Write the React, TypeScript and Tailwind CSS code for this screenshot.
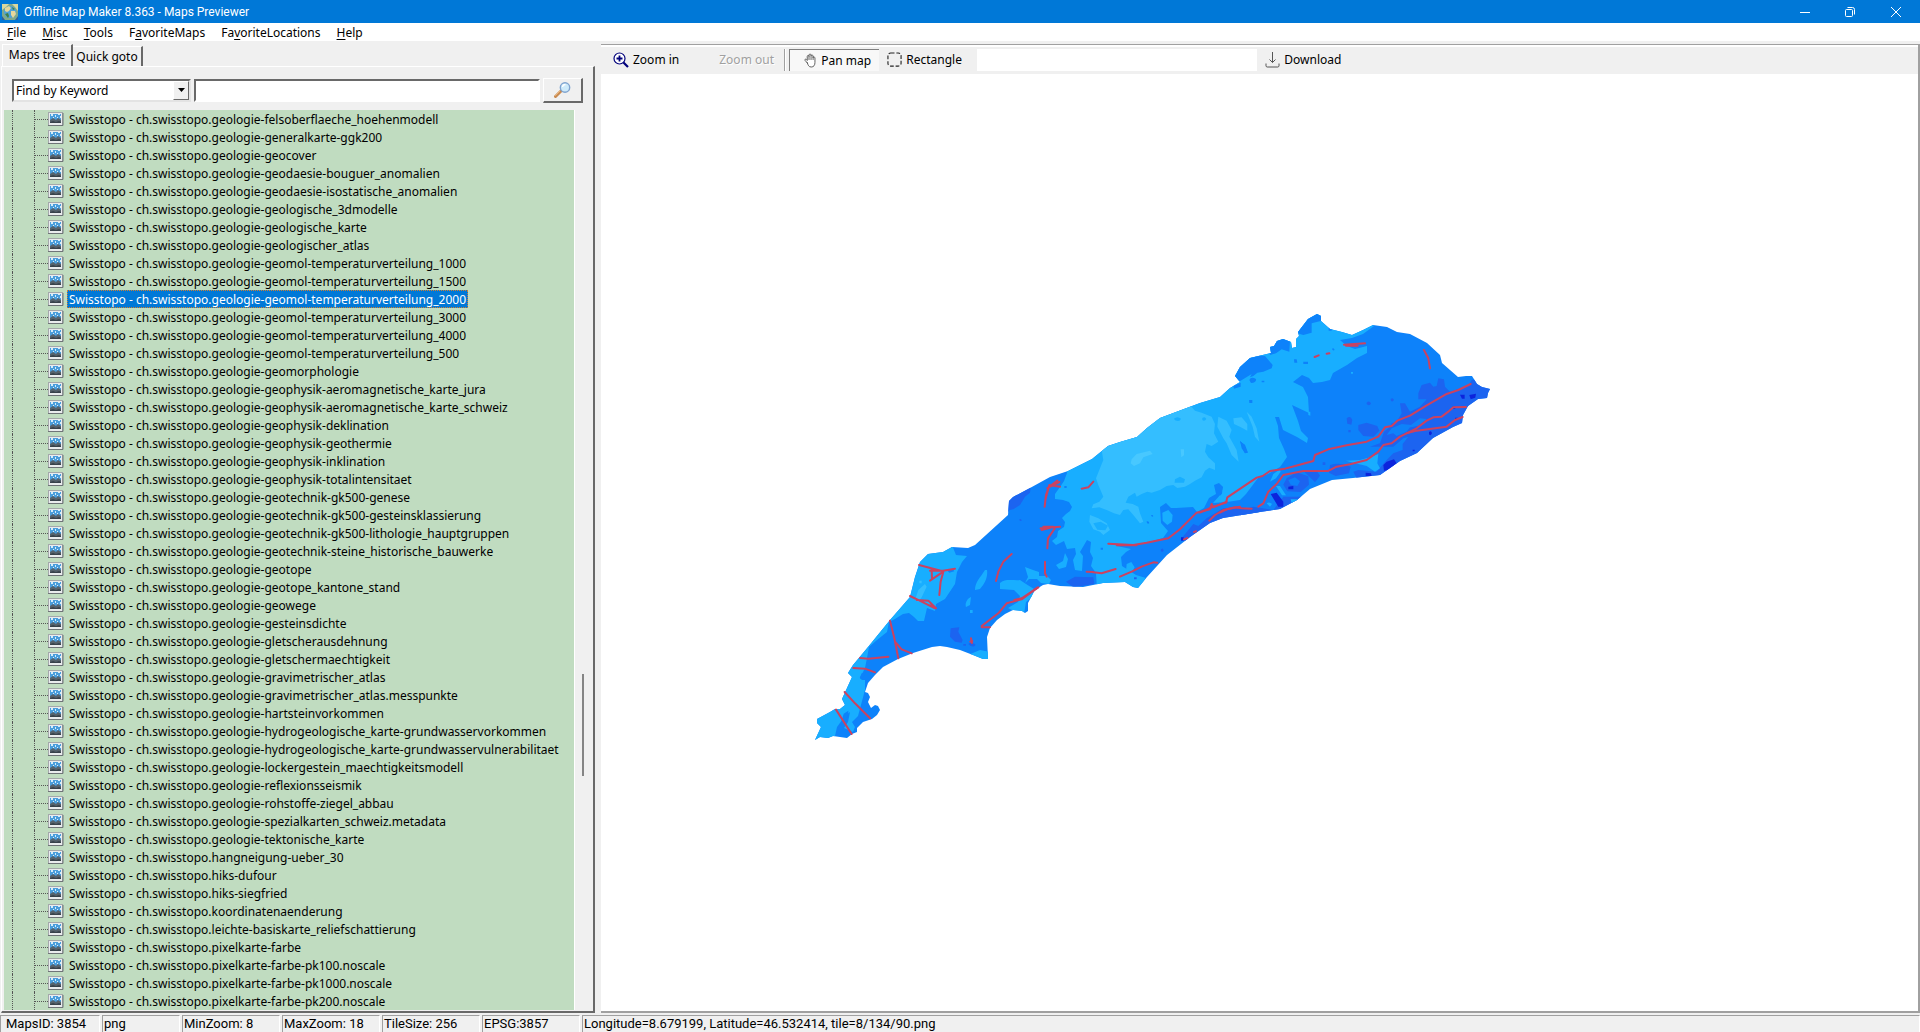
import { useState } from 'react'
import type { ReactNode } from 'react'

const layers = [
  'geologie-felsoberflaeche_hoehenmodell',
  'geologie-generalkarte-ggk200',
  'geologie-geocover',
  'geologie-geodaesie-bouguer_anomalien',
  'geologie-geodaesie-isostatische_anomalien',
  'geologie-geologische_3dmodelle',
  'geologie-geologische_karte',
  'geologie-geologischer_atlas',
  'geologie-geomol-temperaturverteilung_1000',
  'geologie-geomol-temperaturverteilung_1500',
  'geologie-geomol-temperaturverteilung_2000',
  'geologie-geomol-temperaturverteilung_3000',
  'geologie-geomol-temperaturverteilung_4000',
  'geologie-geomol-temperaturverteilung_500',
  'geologie-geomorphologie',
  'geologie-geophysik-aeromagnetische_karte_jura',
  'geologie-geophysik-aeromagnetische_karte_schweiz',
  'geologie-geophysik-deklination',
  'geologie-geophysik-geothermie',
  'geologie-geophysik-inklination',
  'geologie-geophysik-totalintensitaet',
  'geologie-geotechnik-gk500-genese',
  'geologie-geotechnik-gk500-gesteinsklassierung',
  'geologie-geotechnik-gk500-lithologie_hauptgruppen',
  'geologie-geotechnik-steine_historische_bauwerke',
  'geologie-geotope',
  'geologie-geotope_kantone_stand',
  'geologie-geowege',
  'geologie-gesteinsdichte',
  'geologie-gletscherausdehnung',
  'geologie-gletschermaechtigkeit',
  'geologie-gravimetrischer_atlas',
  'geologie-gravimetrischer_atlas.messpunkte',
  'geologie-hartsteinvorkommen',
  'geologie-hydrogeologische_karte-grundwasservorkommen',
  'geologie-hydrogeologische_karte-grundwasservulnerabilitaet',
  'geologie-lockergestein_maechtigkeitsmodell',
  'geologie-reflexionsseismik',
  'geologie-rohstoffe-ziegel_abbau',
  'geologie-spezialkarten_schweiz.metadata',
  'geologie-tektonische_karte',
  'hangneigung-ueber_30',
  'hiks-dufour',
  'hiks-siegfried',
  'koordinatenaenderung',
  'leichte-basiskarte_reliefschattierung',
  'pixelkarte-farbe',
  'pixelkarte-farbe-pk100.noscale',
  'pixelkarte-farbe-pk1000.noscale',
  'pixelkarte-farbe-pk200.noscale',
]

// [before, hotkey, after]
const menus = [
  ['', 'F', 'ile'],
  ['', 'M', 'isc'],
  ['', 'T', 'ools'],
  ['F', 'a', 'voriteMaps'],
  ['Fa', 'v', 'oriteLocations'],
  ['', 'H', 'elp'],
]

const AppIcon = () => (
  <svg width="16" height="16" viewBox="0 0 16 16">
    <rect width="16" height="16" rx="1" fill="#7fa98c" />
    <path d="M0 0h7L4 3 0 6zM10 0h6v7l-3-4z" fill="#d9d8a0" />
    <circle cx="8" cy="8" r="6" fill="#4fa3d8" />
    <path d="M3 4l4-2 2 2-2 3-2 1-2-1zM9 7l4 0 1 3-3 4-2-3z" fill="#e6d79b" />
    <path d="M3 10l3-1 1 3-1 2zM10 3l3 2-2 1z" fill="#3f7f45" />
    <path d="M0 12l3 4H0zM13 16l3-4v4z" fill="#2d5f9c" />
  </svg>
)

const LayerIcon = () => (
  <svg width="16" height="16" viewBox="0 0 16 16" className="shrink-0">
    <rect x="0.5" y="1.5" width="14" height="13" fill="#e9ebed" stroke="#a4a8ab" />
    <path d="M0 14.500h15V2" fill="none" stroke="#6f7478" />
    <rect x="2" y="3" width="11" height="9" fill="#4a9ddc" />
    <path d="M3 3h2v2H3zM7 4h1v2H7zM10 3h2v1h-2zM5 6h1v1H5zM9 6h1v1H9zM12 5h1v2h-1z" fill="#d3ecfa" />
    <path d="M2 9l3-2 3 2 2-2 3 2v3H2z" fill="#56626c" />
    <path d="M2 11l3-1 3 1 3-1 2 1v1H2z" fill="#38424b" />
  </svg>
)

const SearchIcon = () => (
  <svg width="17" height="16" viewBox="0 0 17 16">
    <path d="M1.5 14.5L7 9" stroke="#c98a50" strokeWidth="3" strokeLinecap="round" />
    <path d="M1.2 13.6L6 8.8" stroke="#efc08a" strokeWidth="1" />
    <circle cx="11" cy="5.5" r="4.7" fill="#cdeafa" stroke="#7fa3cf" strokeWidth="1.4" />
    <path d="M8.5 5a3 3 0 0 1 3-2.500" stroke="#fff" strokeWidth="1.300" fill="none" />
  </svg>
)

const ZoomInIcon = () => (
  <svg width="16" height="16" viewBox="0 0 16 16" fill="none" stroke="#00007b">
    <circle cx="6.500" cy="6.500" r="5.500" strokeWidth="1.200" fill="#fff" />
    <path d="M3.500 6.500h6M6.500 3.500v6" strokeWidth="1.800" />
    <path d="M10.500 10.500l4.500 4.500" strokeWidth="2.200" />
  </svg>
)

const HandIcon = () => (
  <svg width="13" height="15" viewBox="0 0 14 16" fill="#fff" stroke="#555" strokeWidth="1" strokeLinejoin="round" strokeLinecap="round">
    <path d="M3.500 10.500L1.200 8c-.8-.9.3-1.900 1.200-1.200L3.500 8V3.500c0-1.200 1.900-1.200 1.900 0V2c0-1.200 2.200-1.200 2.200 0v1c0-1.200 2.200-1.100 2.200.2V5c0-1.100 2-1 2 .2V10c0 3-1.200 5-4 5C5 15 4.500 13 3.500 10.500z" />
    <path d="M5.400 3.500V7M7.600 3v4M9.800 4v3" />
  </svg>
)

const RectIcon = () => (
  <svg width="15" height="15" viewBox="0 0 16 16" fill="none" stroke="#222" strokeWidth="1.200">
    <rect x="1" y="1" width="14" height="14" rx="3" strokeDasharray="4 2" />
  </svg>
)

const DownloadIcon = () => (
  <svg width="15" height="16" viewBox="0 0 15 16" fill="none" stroke="#555" strokeWidth="1">
    <path d="M7.500 0v10.500M4.500 7.500l3 3 3-3M1 11.500v2.300c0 .7.400 1.200 1.200 1.200h10.600c.8 0 1.200-.5 1.200-1.200v-2.300" />
  </svg>
)

const outline =
  'M815 740L820 737 828 738 833 736 847 738 852 734 857 732 857 728 863 722 872 719 877 715 880 710 878 706 875 705 871 708 868 702 870 697 868 693 865 692 868 683 875 675 883 667 898 659 913 653 932 647 940 646 947 647 960 650 973 655 983 659 988 659 987 637 990 628 997 620 1005 614 1013 610 1022 611 1025 613 1028 611 1028 603 1035 590 1043 585 1048 584 1060 586 1083 587 1103 583 1125 582 1133 587 1138 588 1147 577 1167 555 1190 537 1210 523 1223 518 1260 512 1280 509 1297 500 1310 489 1332 480 1353 478 1380 475 1390 468 1400 461 1417 453 1433 438 1453 427 1462 423 1463 415 1468 406 1478 399 1487 398 1488 393 1490 389 1482 387 1477 384 1472 376 1466 376 1458 377 1442 363 1440 355 1427 343 1410 334 1397 332 1387 327 1373 325 1363 330 1352 335 1342 332 1330 329 1321 321 1321 316 1317 314 1308 319 1298 332 1299 336 1296 339 1296 347 1292 348 1291 342 1283 339 1277 341 1274 346 1270 347 1271 353 1250 358 1240 367 1235 376 1240 382 1230 388 1220 397 1200 403 1160 418 1147 428 1137 437 1120 442 1108 446 1092 459 1068 471 1050 477 1030 488 1013 497 1009 501 1008 515 975 545 968 548 952 547 943 552 928 554 920 562 915 577 910 597 890 620 868 647 853 665 848 673 852 677 842 699 845 705 840 709 835 709 830 712 817 719 817 723 821 727Z'

const SwissMap = () => (
  <svg className="block w-full h-full" viewBox="601 74 1317 937" role="img" aria-label="geologie-geomol-temperaturverteilung_2000">
    <defs>
      <clipPath id="area"><path d={outline} /></clipPath>
    </defs>
    <path d={outline} fill="#0d82fa" />
    <g clipPath="url(#area)">
      {/* light zone */}
      <g fill="#18aeff">
        <path d="M1067 465L1067 473 1064 481 1060 487 1055 494 1055 499 1063 500 1069 502 1072 507 1070 511 1066 514 1062 518 1065 522 1064 527 1058 531 1057 537 1052 541 1056 545 1064 541 1067 549 1075 548 1076 554 1073 560 1075 570 1082 571 1083 556 1080 552 1087 540 1091 542 1090 552 1093 558 1091 566 1096 573 1097 590 1128 590 1139 590 1146 578 1136 575 1122 566 1121 557 1126 552 1131 549 1117 546 1120 544 1142 544 1163 538 1168 531 1161 523 1160 507 1166 503 1171 508 1176 508 1193 507 1197 512 1204 508 1209 498 1216 494 1214 485 1219 483 1223 487 1221 494 1213 503 1227 502 1240 500 1246 494 1258 478 1268 474 1280 467 1287 457 1284 449 1279 438 1278 426 1275 417 1279 417 1283 430 1297 437 1307 443 1308 438 1301 431 1298 421 1292 405 1309 413 1308 397 1303 387 1293 382 1302 375 1309 378 1313 383 1322 382 1330 380 1333 373 1347 365 1357 358 1367 353 1367 346 1355 349 1347 346 1340 340 1352 338 1363 334 1374 326 1350 300 1290 300 1215 390 1150 410Z" />
        <path d="M800 760L835 736 837 727 845 716 850 712 848 722 844 728 853 732 855 727 852 722 858 716 865 690 865 680 862 680 860 678 865 668 867 658 869 647 877 640 887 632 889 622 895 619 903 614 909 613 914 617 918 621 924 621 927 608 935 611 936 604 945 599 949 593 955 584 957 572 962 562 967 556 956 555 952 545 920 540 840 640 800 720Z" />
        <path d="M985 570c-5 8-10 12-10 20l5-1c5-6 8-12 7-19zM971 597c-5 2-6 8-5 10l4-2zM968 655l12-5 10 2v10zM1000 583c5-5 15-2 20-3l6 4 8 5-2 8-6 5-2 12-8-2-8-4 10-6 2-6-6-6-14-1zM1025 567l8 3 6 2 0 4 8 0 4 4-2 4-8-1-4-4-8 0-4 4 3-6zM1065 553l-2 8-7 4 3 4 7-2 2-8z" />
      </g>
      {/* lighter core */}
      <g transform="translate(960 400) scale(.3333)">
        <path fill="#34beff" d="M425 150L430 180 420 205 408 235 415 255 430 290 418 305 400 313 395 325 418 322 440 330 462 340 480 345 490 330 505 328 520 345 540 370 550 365 540 340 535 320 518 312 497 308 505 290 525 278 530 290 545 282 562 275 575 278 600 270 620 258 640 255 652 264 675 260 690 252 705 242 725 232 735 212 748 203 765 210 765 190 745 172 735 155 740 132 755 138 775 125 762 100 765 72 755 50 725 38 705 32 690 15 560 60 520 110 440 130Z" />
        <path fill="#34beff" d="M775 50L800 62 815 90 808 110 830 150 836 185 815 165 800 130 790 115 772 80ZM820 55L845 52 862 72 862 92 840 80 822 72ZM860 35L875 50 890 85 898 125 885 110 878 80ZM390 345L415 355 440 370 450 390 430 405 420 395 400 388 388 365Z" />
        <path fill="#18aeff" d="M400 370l22-5 22 12-8 14-24-2zM645 238l15-8 15 8-3 10-28 0zM642 56q10-9 21 0q-3 11-18 5zM727 54q8-6 12 3q-5 8-12 3zM508 292l16-4 4 10-12 6z" />
        <path fill="#48c8ff" d="M515 178L530 162 570 152 578 162 550 172 540 190 522 198 512 190ZM662 148l10 0 0 18-8 6z" />
        <path fill="#0d82fa" d="M840 122L852 135 862 155 855 160 845 145ZM868 0l8 0 0 8-6 0zM573 346q6-3 7 3q-5 3-7-3zM560 364q7-2 8 6q-8 4-8-6zM422 443h7v6h-7zM313 258h7v6h-7z" />
        <path fill="#18aeff" d="M607 338L625 330 638 345 636 365 622 375 608 362ZM500 492l14-6 10 16-8 14-18-2zM560 412l14-8 5 12-12 8z" />
        <path fill="#1c64f0" d="M140 345L140 290 212 262 210 278 195 290 180 315 160 328 148 330ZM318 545L345 530 400 532 403 552 340 562ZM602 450q7-10 9 2q-6 8-9-2zM665 415L700 372 715 378 740 355 790 325 845 322 880 328 910 345 760 385 680 430ZM178 358q6-3 7 4q-7 3-7-4zM522 532h8v6h-8z" />
        <path fill="#0c24dc" d="M663 412l8 0 0 10-8 0z" />
      </g>
      {/* north-east */}
      <g transform="translate(1220 300) scale(.3333)">
        <path fill="#0d82fa" d="M40 250L62 242 95 222 90 232 100 228 112 218 130 215 155 205 158 195 135 168 100 165 40 200ZM88 240q5-12 20-3q2 10-15 12zM150 165L168 160 185 148 208 155 210 120 180 110 145 140ZM232 100L250 105 275 98 275 70 305 62 310 40 260 40ZM222 178h8l2 10h-9zM250 185h14v7h-14zM336 146q6-4 8 4q-6 4-8-4zM326 82h9v10h-9zM88 300h9v9h-9zM125 242h8v5h-8zM60 424L75 434 84 458 75 460ZM40 258l22-10 0 12-20 6zM0 555l8 6-2 20-6 6z" />
        <path fill="#1c64f0" d="M820 230L755 240 745 258 690 275 675 260 672 238 655 235 650 258 640 260 630 248 605 255 595 280 595 298 620 298 600 320 570 335 555 310 540 310 545 340 530 365 515 370 505 385 492 395 480 430 450 440 500 440 520 440 550 415 565 410 548 432 548 450 520 460 500 480 470 515 415 510 400 515 410 535 560 540 730 400 830 300ZM415 375L440 368 472 378 478 392 460 410 430 408 415 390ZM380 355q12-10 17 5l-3 14-12-3zM385 390h7v7h-7zM440 308q8-8 13 2q-4 10-13 2zM512 297q6-6 10 2q-3 8-9 4zM330 495q30-10 62 5l-5 20-40 8-20-10zM200 535l30-18 35 12 2 25-25 22-40-2-12-20zM60 630l40-10 60 10 30-40 60 0-40 50-150 10zM308 487h8v8h-8zM250 512l40 0 10 15-15 20-15-15z" />
        <path fill="#0d82fa" d="M500 405L515 385 545 372 575 375 560 395 530 408 520 400ZM560 385l40-30 20 2-25 20zM205 540l20-8 15 12-8 14-20-4z" />
        <path fill="#18aeff" d="M378 482L420 480 450 472 475 462 472 490 480 505 465 515 440 498 400 488ZM150 545L160 522 180 508 182 515 168 535ZM168 558l12 0 18 28-12 0zM140 610q8-6 16 2l-6 8zM212 598l28 0-5 12-20 0zM393 216h6v5h-6zM265 335l6 0 0 12-6-2z" />
        <path fill="#0c24dc" d="M152 582L170 578 190 605 190 620 175 620ZM205 560l15-2 0 10-15 0zM490 495L500 485 522 478 530 490 510 510 492 512ZM437 518l16 2 2 8-18 0zM720 284l14 0 0 12-8 0zM748 285l20-4-2 12-14 5zM627 396q7-6 9 4q-5 10-9 2zM697 320h9v6h-9zM705 353h8v6h-8zM578 449h6v5h-6z" />
      </g>
      {/* south-west */}
      <g transform="translate(800 540) scale(.3333)">
        <path fill="#1c64f0" d="M452 265L478 262 475 275 488 300 485 308 465 305 450 290ZM505 312q10-8 22 2q-8 12-22-2zM490 312h8v5h-8z" />
        <path fill="#0d82fa" d="M440 90l18-4 5 8-15 4zM145 512l0 12-12 25-10 0 8-28zM185 400l14-2-14 20-6-4z" />
        <path fill="#34beff" d="M345 180L355 150 375 132 380 140 365 172 355 185ZM358 122h7v8h-7z" />
        <path fill="#18aeff" d="M510 210h8v9h-8z" />
      </g>
    </g>
    {/* faults */}
    <g fill="none" stroke="#cb4260" strokeWidth="6" strokeLinejoin="round" strokeLinecap="round">
      <g transform="translate(1220 300) scale(.3333)">
        <path d="M-60 638L-20 620 18 608 22 592 110 533 128 528 150 513 195 506 225 498 280 483 285 465 325 448 380 436 440 425 475 410 495 382 515 378 532 362 570 347 620 316 680 282 715 270 752 252" />
        <path d="M115 620L130 610 145 575 170 552 190 525 250 513 325 513 350 500 390 493 440 480 475 455 490 435 515 430 540 410 590 385 620 362 640 352 665 350 685 335 700 322 738 321" />
        <path d="M560 400L590 392 680 380 705 360 728 351M372 134L435 130M378 137h35M612 150L625 175 630 205M284 171L296 166M320 161L328 160M0 638L20 628 45 622 65 625 95 626" />
      </g>
      <g transform="translate(960 400) scale(.3333)">
        <path d="M445 431L520 435 560 428 625 415 660 388 710 338 750 328 755 312 760 322 800 305M470 436h60M748 362L765 345 790 330 840 320M380 515L400 516M395 516l30 4 42-13M480 530L515 515 545 500 580 487 592 488M365 266L385 262 400 245M672 418l10-4M702 396l6-2M108 543L115 515 130 485 155 462M255 485L255 520 260 530M163 600L185 595 235 562" />
        <path d="M254 320L258 285 266 262 298 246M256 300L268 255 300 260M262 265L292 242M242 385L300 380M245 390l30-8M262 445L264 415 285 384M250 380l30 0" />
      </g>
      <g transform="translate(800 540) scale(.3333)">
        <path d="M357 75L425 93 465 86M395 88L396 115M390 122L430 95 422 125 418 165M390 92h40M330 168L365 185 405 205M350 180L385 182 408 205 390 196M270 242L282 290 295 355M285 305L305 328 335 340M180 354L205 356 265 350M160 384L195 386 225 397M134 456L165 490 210 535M108 509L155 582M545 262L570 262M545 258L595 220 620 190 665 178 712 143M513 295l3 14M511 305l6-2" />
      </g>
    </g>
  </svg>
)

const StatusCell = ({ children, className = 'w-[98px]' }: { children: ReactNode; className?: string }) => (
  <div className={`border border-t-[#a0a0a0] border-l-[#a0a0a0] border-b-white border-r-white px-px leading-4 whitespace-nowrap overflow-hidden ${className}`}>
    {children}
  </div>
)

export default function App() {
  const [selected, setSelected] = useState(10)
  const [keyword, setKeyword] = useState('')

  return (
    <div className="min-h-screen flex flex-col bg-[#f0f0f0] text-black text-[12px] font-['Noto_Sans',sans-serif] select-none">
      {/* Title bar */}
      <header className="h-[23px] shrink-0 flex items-center bg-[#0078d7] text-white">
        <div className="pl-[2px] pr-[6px]"><AppIcon /></div>
        <h1 className="font-[Roboto,sans-serif]">Offline Map Maker 8.363 - Maps Previewer</h1>
        <div className="ml-auto flex">
          <button aria-label="Minimize" className="w-[45px] h-[20px] flex items-center justify-center">
            <svg width="10" height="10" stroke="#fff"><path d="M0 5.500h10" /></svg>
          </button>
          <button aria-label="Restore" className="w-[45px] h-[20px] flex items-center justify-center">
            <svg width="10" height="10" fill="none" stroke="#fff"><rect x="0.500" y="2.500" width="7" height="7" rx="1" /><path d="M2.500.5h5a2 2 0 0 1 2 2v5" /></svg>
          </button>
          <button aria-label="Close" className="w-[48px] h-[20px] flex items-center justify-center">
            <svg width="10" height="10" stroke="#fff"><path d="M0 0l10 10M10 0L0 10" /></svg>
          </button>
        </div>
      </header>

      {/* Menu */}
      <nav className="h-[18px] shrink-0 flex items-center gap-4 pl-[7px] pt-[2px] bg-white">
        {menus.map(([before, key, after]) => (
          <button key={before + key + after} className="leading-4">
            {before}<span className="underline underline-offset-2">{key}</span>{after}
          </button>
        ))}
      </nav>

      <div className="flex-1 flex">
        {/* Left panel */}
        <aside className="w-[595px] shrink-0 flex flex-col pt-[3px] pl-px">
          <div role="tablist" className="flex items-end h-[22px] pl-px">
            <button role="tab" aria-selected="true" className="h-[22px] w-[71px] pb-[2px] leading-4 border-t border-l border-t-white border-l-white border-r-2 border-r-[#696969]">Maps tree</button>
            <button role="tab" aria-selected="false" className="h-[20px] w-[70px] leading-4 border-t border-t-white border-r-2 border-r-[#696969]">Quick goto</button>
          </div>
          <div className="flex-1 flex flex-col border-t border-l border-t-white border-l-white border-r-2 border-b-2 border-r-[#696969] border-b-[#696969] pl-[2px] pb-px">
            <div className="flex items-center h-[43px] pt-[3px] pl-2 pr-[10px] gap-[3px]">
              <div className="relative w-[179px] shrink-0">
                <select aria-label="Search mode" className="appearance-none block w-full h-[23px] pl-[2px] pt-px bg-white border-2 border-t-[#696969] border-l-[#696969] border-b-[#e3e3e3] border-r-[#e3e3e3] rounded-none outline-none">
                  <option>Find by Keyword</option>
                </select>
                <span className="absolute right-[2px] top-[2px] w-[16px] h-[19px] flex items-center justify-center bg-[#f0f0f0] border border-t-white border-l-white border-b-[#696969] border-r-[#696969] pointer-events-none">
                  <svg width="7" height="4"><path d="M0 0h7L3.500 4z" /></svg>
                </span>
              </div>
              <input
                aria-label="Keyword"
                value={keyword}
                onChange={e => setKeyword(e.target.value)}
                className="flex-1 h-[23px] px-1 bg-white border-2 border-t-[#696969] border-l-[#696969] border-b-white border-r-white outline-none"
              />
              <button aria-label="Search" className="w-[40px] h-[25px] flex items-center justify-center border border-t-white border-l-white border-b-2 border-r-2 border-b-[#696969] border-r-[#696969]">
                <SearchIcon />
              </button>
            </div>

            <div className="flex-1 flex">
              <ul role="tree" className="w-[571px] flex bg-[#c0dcc0] border-r border-r-white flex-col overflow-hidden">
                {layers.map((name, i) => (
                  <li key={name} role="treeitem" aria-selected={i === selected} className="h-[18px] flex items-center pl-2">
                    <span className="w-[22px] h-full border-l border-dotted border-[#555]" />
                    <span className="w-[14px] h-full border-l border-dotted border-[#555] flex items-center">
                      <span className="w-full border-t border-dotted border-[#555]" />
                    </span>
                    <LayerIcon />
                    <button
                      onClick={() => setSelected(i)}
                      className={`ml-[3px] h-[18px] px-px leading-[18px] border border-dotted whitespace-nowrap ${i === selected ? 'bg-[#0078d7] text-white border-[#d08030]' : 'border-transparent'}`}
                    >
                      Swisstopo - ch.swisstopo.{name}
                    </button>
                  </li>
                ))}
              </ul>
              <div className="flex-1 flex flex-col items-end pr-[9px]">
                <div className="grow-[564]" />
                <div className="w-[2px] grow-[102] bg-[#858585]" />
                <div className="grow-[234]" />
              </div>
            </div>
          </div>
        </aside>

        {/* Preview */}
        <main className="flex-1 ml-[6px] mt-[3px] flex flex-col border-t border-t-[#a0a0a0] border-b-2 border-b-[#a0a0a0] border-r-2 border-r-[#a0a0a0]">
          <div className="h-[29px] shrink-0 flex items-center border-t-2 border-t-white pl-3 pb-[2px]">
            <button className="flex items-center gap-1"><ZoomInIcon />Zoom in</button>
            <button disabled className="ml-[40px] w-[57px] whitespace-nowrap text-left text-[#a0a0a0] [text-shadow:1px_1px_0_#fff]">Zoom out</button>
            <div className="ml-[8px] w-[2px] h-[22px] border-l border-l-[#a0a0a0] bg-white" />
            <button aria-pressed="true" className="ml-[3px] w-[90px] h-[22px] pl-[14px] pt-px flex items-center gap-1 bg-[#f8f8f8] border-t border-l border-t-[#808080] border-l-[#808080]">
              <HandIcon />Pan map
            </button>
            <button className="ml-2 w-[76px] flex items-center gap-1"><RectIcon />Rectangle</button>
            <input aria-label="Coordinates" className="ml-[14px] w-[280px] h-[22px] px-1 bg-white outline-none" />
            <button className="ml-2 flex items-center gap-1"><DownloadIcon />Download</button>
          </div>
          <div className="flex-1 bg-white">
            <SwissMap />
          </div>
        </main>
      </div>

      {/* Status bar */}
      <footer className="h-[20px] shrink-0 pt-[2px] flex gap-[2px] text-[13px] font-[Roboto,sans-serif]">
        <StatusCell className="w-[100px] pl-[5px]">MapsID: 3854</StatusCell>
        <StatusCell className="w-[78px]">png</StatusCell>
        <StatusCell>MinZoom: 8</StatusCell>
        <StatusCell>MaxZoom: 18</StatusCell>
        <StatusCell>TileSize: 256</StatusCell>
        <StatusCell>EPSG:3857</StatusCell>
        <StatusCell className="flex-1">Longitude=8.679199, Latitude=46.532414, tile=8/134/90.png</StatusCell>
      </footer>
    </div>
  )
}
